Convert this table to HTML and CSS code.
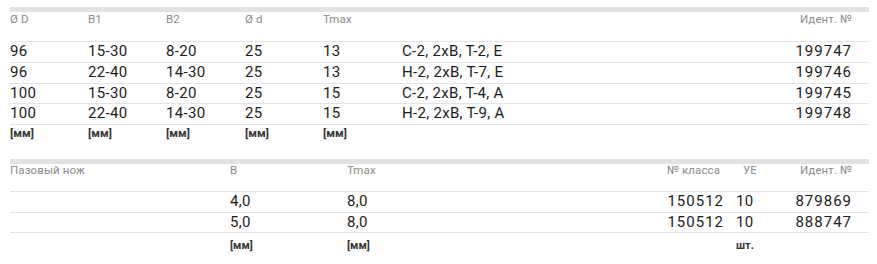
FILE: index.html
```html
<!DOCTYPE html>
<html lang="ru">
<head>
<meta charset="utf-8">
<title>Пазовый нож</title>
<link rel="stylesheet" href="styles.css">
</head>
<body>
<div class="sheet">
  <table class="grid grid-a">
    <colgroup>
      <col class="a1"><col class="a2"><col class="a3"><col class="a4"><col class="a5"><col class="a6"><col class="a7">
    </colgroup>
    <thead>
      <tr><th>Ø D</th><th>B1</th><th>B2</th><th>Ø d</th><th>Tmax</th><th></th><th class="num">Идент. №</th></tr>
    </thead>
    <tbody>
      <tr><td>96</td><td>15-30</td><td>8-20</td><td>25</td><td>13</td><td>С-2, 2хВ, Т-2, Е</td><td class="num id">199747</td></tr>
      <tr><td>96</td><td>22-40</td><td>14-30</td><td>25</td><td>13</td><td>Н-2, 2хВ, Т-7, Е</td><td class="num id">199746</td></tr>
      <tr><td>100</td><td>15-30</td><td>8-20</td><td>25</td><td>15</td><td>С-2, 2хВ, Т-4, А</td><td class="num id">199745</td></tr>
      <tr><td>100</td><td>22-40</td><td>14-30</td><td>25</td><td>15</td><td>Н-2, 2хВ, Т-9, А</td><td class="num id">199748</td></tr>
    </tbody>
    <tfoot>
      <tr><td>[мм]</td><td>[мм]</td><td>[мм]</td><td>[мм]</td><td>[мм]</td><td></td><td></td></tr>
    </tfoot>
  </table>

  <table class="grid grid-b">
    <colgroup>
      <col class="b1"><col class="b2"><col class="b3"><col class="b4"><col class="b5"><col class="b6">
    </colgroup>
    <thead>
      <tr><th>Пазовый нож</th><th>B</th><th>Tmax</th><th class="num cls-head">№ класса</th><th class="ue-head">УЕ</th><th class="num">Идент. №</th></tr>
    </thead>
    <tbody>
      <tr><td></td><td>4,0</td><td>8,0</td><td class="num cls id">150512</td><td>10</td><td class="num id">879869</td></tr>
      <tr><td></td><td>5,0</td><td>8,0</td><td class="num cls id">150512</td><td>10</td><td class="num id">888747</td></tr>
    </tbody>
    <tfoot>
      <tr><td></td><td>[мм]</td><td>[мм]</td><td></td><td>шт.</td><td></td></tr>
    </tfoot>
  </table>
</div>
</body>
</html>
```

FILE: styles.css
```css
html, body {
  margin: 0;
  padding: 0;
  background: #ffffff;
}

body {
  font-family: Roboto, "Liberation Sans", Arial, sans-serif;
  color: #1c1c1c;
}

.sheet {
  padding: 7px 0 0 10px;
}

.grid {
  width: 859px;
  table-layout: fixed;
  border-collapse: separate;
  border-spacing: 0;
}

.grid th {
  font-weight: normal;
  font-size: 11.5px;
  line-height: 13px;
  letter-spacing: 0.1px;
  color: #8a8a8a;
  text-align: left;
  vertical-align: top;
  border-top: 5px solid #e2e2e2;
  border-bottom: 1px solid #e4e4e4;
  padding: 0;
  white-space: nowrap;
}

.grid td {
  padding: 0;
  font-size: 15px;
  letter-spacing: 0.3px;
  white-space: nowrap;
  vertical-align: top;
}

.grid tbody td {
  border-bottom: 1px solid #e4e4e4;
}

.grid tfoot td {
  font-size: 11.5px;
  font-weight: bold;
  line-height: 14px;
  letter-spacing: 0;
  color: #363636;
}

.grid .num {
  text-align: right;
  padding-right: 17px;
}

.grid .id {
  letter-spacing: 1px;
}

/* first table */
.grid-a th {
  padding-top: 1px;
  padding-bottom: 15px;
}

.grid-a tbody td {
  line-height: 19.75px;
}

.grid-a tfoot td {
  padding-top: 1px;
}

.a1 { width: 78px; }
.a2 { width: 78px; }
.a3 { width: 79px; }
.a4 { width: 78px; }
.a5 { width: 79px; }
.a6 { width: 347px; }
.a7 { width: 120px; }

/* second table */
.grid-b {
  margin-top: 19px;
}

.grid-b th {
  padding-top: 0;
  padding-bottom: 14px;
}

.grid-b tbody td {
  line-height: 19.5px;
}

.grid-b tfoot td {
  padding-top: 6px;
  font-size: 11px;
}

.grid-b .cls-head {
  padding-right: 16px;
}

.grid-b .cls {
  padding-right: 12px;
}

.grid-b .ue-head {
  padding-left: 7px;
}

.b1 { width: 220px; }
.b2 { width: 117px; }
.b3 { width: 320px; }
.b4 { width: 69px; }
.b5 { width: 40px; }
.b6 { width: 93px; }
```
